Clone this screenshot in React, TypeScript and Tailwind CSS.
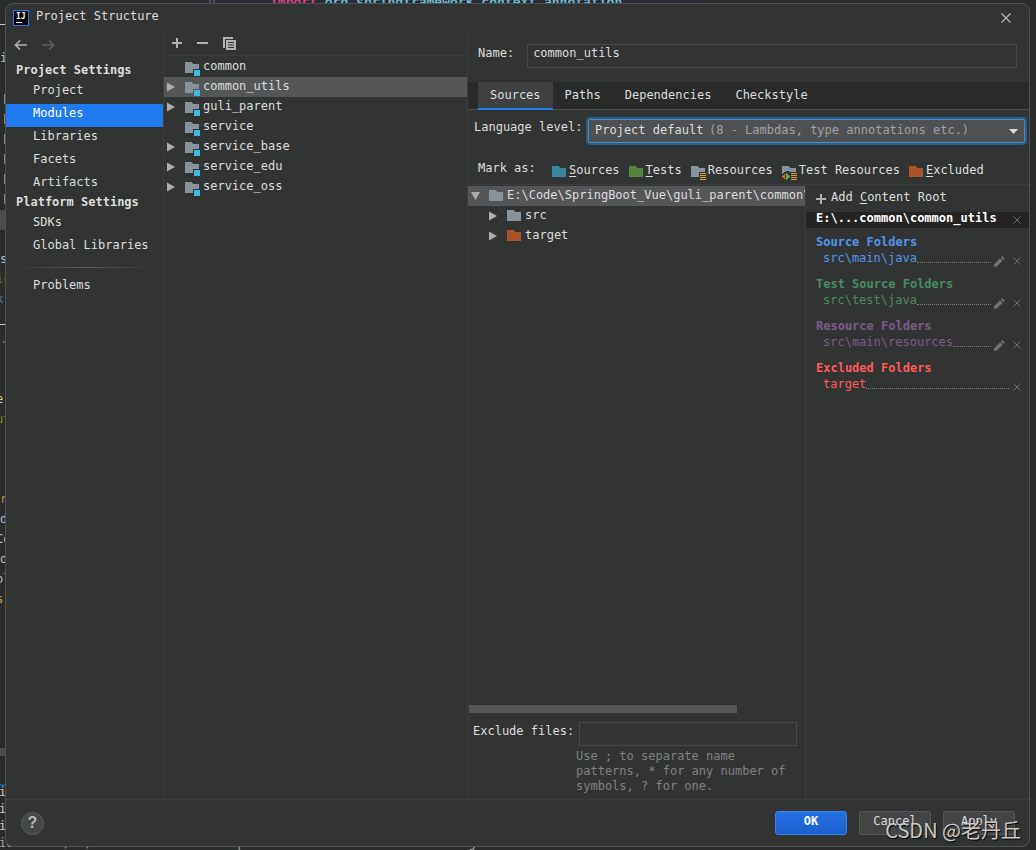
import { ReactNode, useState } from "react";
import clsx from "clsx";

type FolderKind = "plain" | "module" | "resources" | "testResources";

interface Module {
  name: string;
  expandable: boolean;
}

interface ContentGroup {
  title: string;
  path: string;
  color: string;
  editable: boolean;
}

const MODULES: Module[] = [
  { name: "common", expandable: false },
  { name: "common_utils", expandable: true },
  { name: "guli_parent", expandable: true },
  { name: "service", expandable: false },
  { name: "service_base", expandable: true },
  { name: "service_edu", expandable: true },
  { name: "service_oss", expandable: true },
];

const TABS = ["Sources", "Paths", "Dependencies", "Checkstyle"];

const GROUPS: ContentGroup[] = [
  {
    title: "Source Folders",
    path: "src\\main\\java",
    color: "text-[#5394ec]",
    editable: true,
  },
  {
    title: "Test Source Folders",
    path: "src\\test\\java",
    color: "text-[#4b8b62]",
    editable: true,
  },
  {
    title: "Resource Folders",
    path: "src\\main\\resources",
    color: "text-[#7d5a8c]",
    editable: true,
  },
  {
    title: "Excluded Folders",
    path: "target",
    color: "text-[#ff5b5b]",
    editable: false,
  },
];

// slivers of the editor and the build log that stick out left of the dialog
const EDITOR_SLIVERS = [
  { text: "i", className: "left-0 top-[50px] text-[#bfc1c1]" },
  { text: "s", className: "left-0 top-[251px] text-[#bfc1c1]" },
  { text: "ic", className: "-left-1 top-[271px] text-[#7d7a16]" },
  { text: "kr", className: "-left-1 top-[291px] text-[#587e9c]" },
  { text: ".", className: "left-0 top-[331px] text-[#8a8a1a]" },
  { text: "e", className: "-left-1 top-[391px] text-[#d0c8a8]" },
  { text: "ut", className: "-left-1 top-[411px] text-[#7c8a16]" },
  { text: "r", className: "left-0 top-[491px] text-[#cc8242]" },
  { text: "d", className: "left-0 top-[511px] text-[#c3b8cf]" },
  { text: "Co", className: "-left-1 top-[531px] text-[#bfc1c1]" },
  { text: "o", className: "left-0 top-[551px] text-[#bfc1c1]" },
  { text: "ol", className: "-left-1 top-[571px] text-[#a9bccf]" },
  { text: "s", className: "-left-1 top-[591px] text-[#cc9a62]" },
  { text: "i", className: "-left-px top-[784px] text-[#c4c6c0]" },
  { text: "i", className: "-left-px top-[801px] text-[#c4c6c0]" },
  { text: "i", className: "-left-px top-[818px] text-[#c4c6c0]" },
];

function FolderIcon({
  kind = "plain",
  className = "text-[#87939a]",
}: {
  kind?: FolderKind;
  className?: string;
}) {
  return (
    <svg
      width="16"
      height="15"
      viewBox="0 0 16 15"
      className={clsx("shrink-0", className)}
      shapeRendering="crispEdges"
      aria-hidden="true"
    >
      {kind === "plain" && (
        <path d="M0 1h6l1 1h1v1h6v9H0z" fill="currentColor" />
      )}
      {kind === "module" && (
        <>
          <path d="M0 1h6l1 1h1v1h6v5H8v4H0z" fill="currentColor" />
          <rect x="9" y="9" width="6" height="6" fill="#40b6e0" />
        </>
      )}
      {kind === "resources" && (
        <>
          <path d="M0 1h6l1 1h1v1h6v4H8v5H0z" fill="currentColor" />
          <path d="M9 8h6v1H9zM9 10h6v1H9zM9 12h6v1H9zM9 14h6v1H9z" fill="#d9a343" />
        </>
      )}
      {kind === "testResources" && (
        <>
          <path d="M0 1h6l1 1h1v1h6v4H8L5 6 0 9z" fill="currentColor" />
          <path d="M9 8h6v1H9zM9 10h6v1H9zM9 12h6v1H9zM9 14h6v1H9z" fill="#d9a343" />
          <path d="M3 8v7l-3-3.500z" fill="#f26522" />
          <path d="M4 8v7l4-3.500z" fill="#62b543" />
        </>
      )}
    </svg>
  );
}

function Arrow({ open }: { open?: boolean }) {
  return (
    <svg
      width="9"
      height="10"
      viewBox="0 0 9 10"
      fill="#adadad"
      className="shrink-0"
      aria-hidden="true"
    >
      {open ? <path d="M0 1h9L4.500 9z" /> : <path d="M0 0.500v9L8 5z" />}
    </svg>
  );
}

function PlusIcon() {
  return (
    <svg width="10" height="10" viewBox="0 0 10 10" fill="#afb1b3" aria-hidden="true">
      <path d="M4 0h2v4h4v2H6v4H4V6H0V4h4z" />
    </svg>
  );
}

function CrossIcon({ size, className }: { size: number; className: string }) {
  return (
    <svg
      width={size}
      height={size}
      viewBox="0 0 10 10"
      fill="none"
      stroke="currentColor"
      strokeWidth="1.200"
      className={className}
      aria-hidden="true"
    >
      <path d="M0.500 0.500l9 9M9.500 0.500l-9 9" />
    </svg>
  );
}

function PencilIcon() {
  return (
    <svg width="11" height="11" viewBox="0 0 11 11" fill="#6e7173" aria-hidden="true">
      <path d="M0 8.200L6 2.200l2.600 2.600-6 6H0zM6.800 1.400L8.200 0l2.600 2.600-1.400 1.400z" />
    </svg>
  );
}

function NavArrow({ flipped }: { flipped?: boolean }) {
  return (
    <svg
      width="14"
      height="12"
      viewBox="0 0 14 12"
      fill="none"
      stroke="currentColor"
      strokeWidth="1.700"
      className={clsx(flipped && "-scale-x-100")}
      aria-hidden="true"
    >
      <path d="M13 6H1.500M6 1.500L1.500 6 6 10.500" />
    </svg>
  );
}

function Mnemonic({ children }: { children: ReactNode }) {
  return <span className="underline underline-offset-2">{children}</span>;
}

function Backdrop() {
  return (
    <div
      className="absolute inset-0 overflow-hidden whitespace-pre leading-4"
      aria-hidden="true"
    >
      <div className="absolute left-[195px] top-0 h-4 w-[509px] bg-[#272935]" />
      <div className="absolute left-[208px] -top-[6px] text-[13px] text-[#5d6066]">h</div>
      <div className="absolute left-[270px] -top-[6px] text-[13px] font-bold text-[#6fb9cf]">
        <span className="text-[#d8427f]">import</span> org.springframework.context.annotation
      </div>
      <div className="absolute left-0 top-[24px] h-px w-2 bg-[#c4c6c0]" />
      <div className="absolute left-0 top-[324px] h-px w-2 bg-[#c4c6c0]" />
      <div className="absolute left-0 top-[210px] h-5 w-2 bg-[#4b4d4d]" />
      {[94, 114, 134, 154, 174, 194].map((top) => (
        <div
          key={top}
          className="absolute left-1 h-[10px] w-px bg-[#85888a]"
          style={{ top }}
        />
      ))}
      <div className="absolute left-0 top-[748px] h-2 w-2 bg-[#4b4d4d]" />
      <div className="absolute left-0 top-[784px] h-[2px] w-2 bg-[#1c5a85]" />
      {EDITOR_SLIVERS.map(({ text, className }) => (
        <span key={className} className={clsx("absolute", className)}>
          {text}
        </span>
      ))}
      <div className="absolute -left-px top-[835px] text-[#a4a6a4]">
        ion: 2021/10/27 10:01 - Build completed with 1 error and 0 warnings in 2 s 285 ms
      </div>
    </div>
  );
}

function Sidebar() {
  const [active, setActive] = useState("Modules");

  const item = (name: string) => (
    <button
      key={name}
      onClick={() => setActive(name)}
      className={clsx(
        "block h-[23px] w-full pb-[6px] pl-[27px] text-left",
        active === name && "bg-[#1f7bed] text-white",
      )}
    >
      {name}
    </button>
  );

  return (
    <nav className="w-[158px] shrink-0 border-r border-[#3c3e3e]">
      <div className="flex h-[33px] gap-[13px] pl-2 pt-2">
        <button aria-label="Back" className="h-3 w-[14px] text-[#afb1b3]">
          <NavArrow />
        </button>
        <button aria-label="Forward" className="h-3 w-[14px] text-[#5d5f60]">
          <NavArrow flipped />
        </button>
      </div>
      <h2 className="h-[17px] pl-[10px] font-bold leading-3">Project Settings</h2>
      {["Project", "Modules", "Libraries", "Facets", "Artifacts"].map(item)}
      <h2 className="h-[17px] pl-[10px] font-bold leading-3">Platform Settings</h2>
      {["SDKs", "Global Libraries"].map(item)}
      <div className="mx-2 my-2 h-px bg-linear-to-r from-transparent via-[#5c5e5e] to-transparent" />
      {item("Problems")}
    </nav>
  );
}

function ModuleList() {
  const [selected, setSelected] = useState("common_utils");

  return (
    <section className="w-[304px] shrink-0 border-r border-[#3c3e3e]">
      <div className="mb-px flex h-[25px] items-center gap-[15px] border-b border-[#3c3e3e] pl-2">
        <button aria-label="Add module">
          <PlusIcon />
        </button>
        <button aria-label="Remove module" className="h-[2px] w-[11px] bg-[#afb1b3]" />
        <button aria-label="Copy module">
          <svg width="13" height="13" viewBox="0 0 13 13" fill="#afb1b3" aria-hidden="true">
            <path d="M0 0h10v2H2v9H0z" />
            <path d="M3 3h10v10H3zM5 5v1h6V5zM5 7.500v1h6v-1zM5 10v1h6v-1z" fillRule="evenodd" />
          </svg>
        </button>
      </div>
      {MODULES.map(({ name, expandable }) => (
        <button
          key={name}
          onClick={() => setSelected(name)}
          className={clsx(
            "flex h-5 w-full items-center pl-[3px]",
            selected === name && "bg-[#555657]",
          )}
        >
          <span className="w-[18px]">{expandable && <Arrow />}</span>
          <FolderIcon kind="module" className="mt-[3px] text-[#87939a]" />
          <span className="pb-[2px] pl-[2px]">{name}</span>
        </button>
      ))}
    </section>
  );
}

function SourceTree() {
  return (
    <div className="flex w-[338px] shrink-0 flex-col border-r border-[#3c3e3e]">
      <ul className="flex-1 pt-px">
        <li>
          <div className="flex h-5 items-center overflow-hidden whitespace-nowrap bg-[#555657] pl-[3px]">
            <Arrow open />
            <span className="pl-[9px]">
              <FolderIcon />
            </span>
            <span className="pb-[2px] pl-[2px]">
              E:\Code\SpringBoot_Vue\guli_parent\common\common_utils
            </span>
          </div>
          <ul>
            {["src", "target"].map((name) => (
              <li key={name} className="flex h-5 items-center pl-[21px]">
                <Arrow />
                <span className="pl-[9px]">
                  <FolderIcon
                    className={name === "target" ? "text-[#a8542a]" : "text-[#87939a]"}
                  />
                </span>
                <span className="pb-[2px] pl-[2px]">{name}</span>
              </li>
            ))}
          </ul>
        </li>
      </ul>
      <div className="ml-px h-2 w-[268px] bg-[#555656]" />
      <div className="flex gap-[5px] pl-[5px] pr-2 pt-[9px]">
        <label htmlFor="exclude" className="pt-px">
          Exclude files:
        </label>
        <input
          id="exclude"
          className="h-6 min-w-0 flex-1 border border-[#474949] px-[5px] outline-none"
        />
      </div>
      <p className="ml-[108px] pb-[5px] pt-[3px] leading-[15px] text-[#808282]">
        Use ; to separate name patterns, * for any number of symbols, ? for one.
      </p>
    </div>
  );
}

function ContentRoots() {
  return (
    <div className="min-w-0 flex-1">
      <button className="flex h-[27px] items-center gap-[5px] pl-[10px]">
        <PlusIcon />
        <span className="pb-[3px]">
          Add <Mnemonic>C</Mnemonic>ontent Root
        </span>
      </button>
      <div className="flex h-4 justify-between bg-[#232323] pl-[10px] pr-2 font-bold leading-3 text-white">
        <span>E:\...common\common_utils</span>
        <button aria-label="Remove content root">
          <CrossIcon size={8} className="text-[#6e7173]" />
        </button>
      </div>
      <div className="flex flex-col gap-[10px] pl-[10px] pr-2 pt-[6px]">
        {GROUPS.map(({ title, path, color, editable }) => (
          <section key={title} className={color}>
            <h3 className="font-bold leading-4">{title}</h3>
            <div className="flex h-4 items-start pl-[7px] leading-4">
              <span>{path}</span>
              <span className="mt-3 flex-1 border-b border-dotted border-[#7b7d7d]" />
              {editable && (
                <button aria-label={`Edit ${path}`} className="ml-[3px] mt-[6px]">
                  <PencilIcon />
                </button>
              )}
              <button
                aria-label={`Remove ${path}`}
                className={clsx("mt-[7px]", editable ? "ml-2" : "ml-1")}
              >
                <CrossIcon size={8} className="text-[#6e7173]" />
              </button>
            </div>
          </section>
        ))}
      </div>
    </div>
  );
}

function MarkButton({ icon, children }: { icon: ReactNode; children: ReactNode }) {
  return (
    <button className="flex h-4 items-center gap-px">
      <span className="pt-1">{icon}</span>
      <span>{children}</span>
    </button>
  );
}

function ModuleEditor() {
  const [tab, setTab] = useState("Sources");

  return (
    <section className="flex min-w-0 flex-1 flex-col">
      <div className="flex gap-[13px] pb-[14px] pl-[10px] pr-3 pt-[13px]">
        <label htmlFor="name" className="pt-px">
          Name:
        </label>
        <input
          id="name"
          defaultValue="common_utils"
          className="h-6 min-w-0 flex-1 border border-[#474949] px-[5px] pb-[6px] outline-none"
        />
      </div>

      <div role="tablist" className="flex h-7 border-b border-[#4e5050] bg-[#292b2b] pl-[10px]">
        {TABS.map((name) => (
          <button
            key={name}
            role="tab"
            aria-selected={tab === name}
            onClick={() => setTab(name)}
            className={clsx(
              "h-7 border-b-2 px-3",
              tab === name ? "border-[#1f7bed] bg-[#3e4042]" : "border-transparent",
            )}
          >
            {name}
          </button>
        ))}
      </div>

      <div className="flex pl-[6px] pr-[2px] pt-[7px]">
        <label htmlFor="level" className="w-28 pt-[2px]">
          Language level:
        </label>
        <div className="relative min-w-0 flex-1">
          <select
            id="level"
            className="block h-7 w-full appearance-none rounded border-2 border-[#265f8b] bg-[#4e5052] pb-[2px] pl-[7px] ring-1 ring-inset ring-[#4a8cc0] outline-none"
          >
            <option>Project default</option>
          </select>
          <span className="pointer-events-none absolute left-[123px] top-[5px] text-[#a0a2a3]">
            (8 - Lambdas, type annotations etc.)
          </span>
          <svg
            width="9"
            height="5"
            viewBox="0 0 9 5"
            fill="#d9dada"
            className="pointer-events-none absolute right-[9px] top-3"
            aria-hidden="true"
          >
            <path d="M0 0h9L4.500 5z" />
          </svg>
        </div>
      </div>

      <div className="flex h-10 items-end border-b border-[#3c3e3e] pb-[6px] pl-[10px]">
        <span className="w-[74px] pb-[2px]">Mark as:</span>
        <div className="flex gap-[9px] whitespace-nowrap">
          <MarkButton icon={<FolderIcon className="text-[#3a85a0]" />}>
            <Mnemonic>S</Mnemonic>ources
          </MarkButton>
          <MarkButton icon={<FolderIcon className="text-[#50833c]" />}>
            <Mnemonic>T</Mnemonic>ests
          </MarkButton>
          <MarkButton icon={<FolderIcon kind="resources" />}>Resources</MarkButton>
          <MarkButton icon={<FolderIcon kind="testResources" />}>Test Resources</MarkButton>
          <MarkButton icon={<FolderIcon className="text-[#a8542a]" />}>
            <Mnemonic>E</Mnemonic>xcluded
          </MarkButton>
        </div>
      </div>

      <div className="flex min-h-0 flex-1">
        <SourceTree />
        <ContentRoots />
      </div>
    </section>
  );
}

function Footer() {
  return (
    <footer className="relative flex h-[47px] shrink-0 items-center gap-3 border-t border-[#3c3e3e] pl-[15px] pr-[14px]">
      <button
        aria-label="Help"
        className="mr-auto size-[23px] rounded-full border border-[#5a5c5c] bg-[#454646] font-['Liberation_Sans'] text-base font-bold leading-5 text-[#b5b7b8]"
      >
        ?
      </button>
      <button className="h-6 w-[72px] rounded-[3px] border border-[#3d82ea] bg-linear-to-b from-[#2470e6] to-[#1b5fcb] pb-1 font-bold text-white">
        OK
      </button>
      <button className="h-6 w-[72px] rounded-[3px] border border-[#565858] bg-[#434445] pb-1">
        Cancel
      </button>
      <button className="h-6 w-[72px] rounded-[3px] border border-[#565858] bg-[#434445] pb-1">
        Apply
      </button>
      <span className="pointer-events-none absolute bottom-[2px] right-2 whitespace-nowrap font-['Noto_Sans_CJK_SC',sans-serif] text-[20px] leading-7 text-[#c9c9c9] [text-shadow:1px_1px_1px_#000]">
        CSDN @老丹丘
      </span>
    </footer>
  );
}

export default function App() {
  return (
    <div className="relative flex h-screen bg-[#2a2c2c] py-[3px] pl-[5px] pr-[6px] font-['DejaVu_Sans_Mono',monospace] text-xs text-[#dcdedd]">
      <Backdrop />
      <div
        role="dialog"
        aria-label="Project Structure"
        className="relative flex min-w-0 flex-1 flex-col overflow-hidden rounded-lg border border-[#505252] bg-[#323433]"
      >
        <header className="flex h-[27px] shrink-0 items-center gap-[7px] pl-[7px] pr-[18px]">
          <span
            className="flex size-4 flex-col items-start gap-px border border-[#1f7bed] bg-black pl-[2px] pt-px font-['DejaVu_Sans_Mono',monospace] text-[8px] font-bold leading-[9px] text-white"
            aria-hidden="true"
          >
            IJ
            <span className="h-px w-[6px] bg-white" />
          </span>
          <h1 className="pb-1">Project Structure</h1>
          <button aria-label="Close" className="ml-auto">
            <CrossIcon size={10} className="text-[#b4b6b6]" />
          </button>
        </header>
        <div className="flex min-h-0 flex-1">
          <Sidebar />
          <ModuleList />
          <ModuleEditor />
        </div>
        <Footer />
      </div>
    </div>
  );
}
